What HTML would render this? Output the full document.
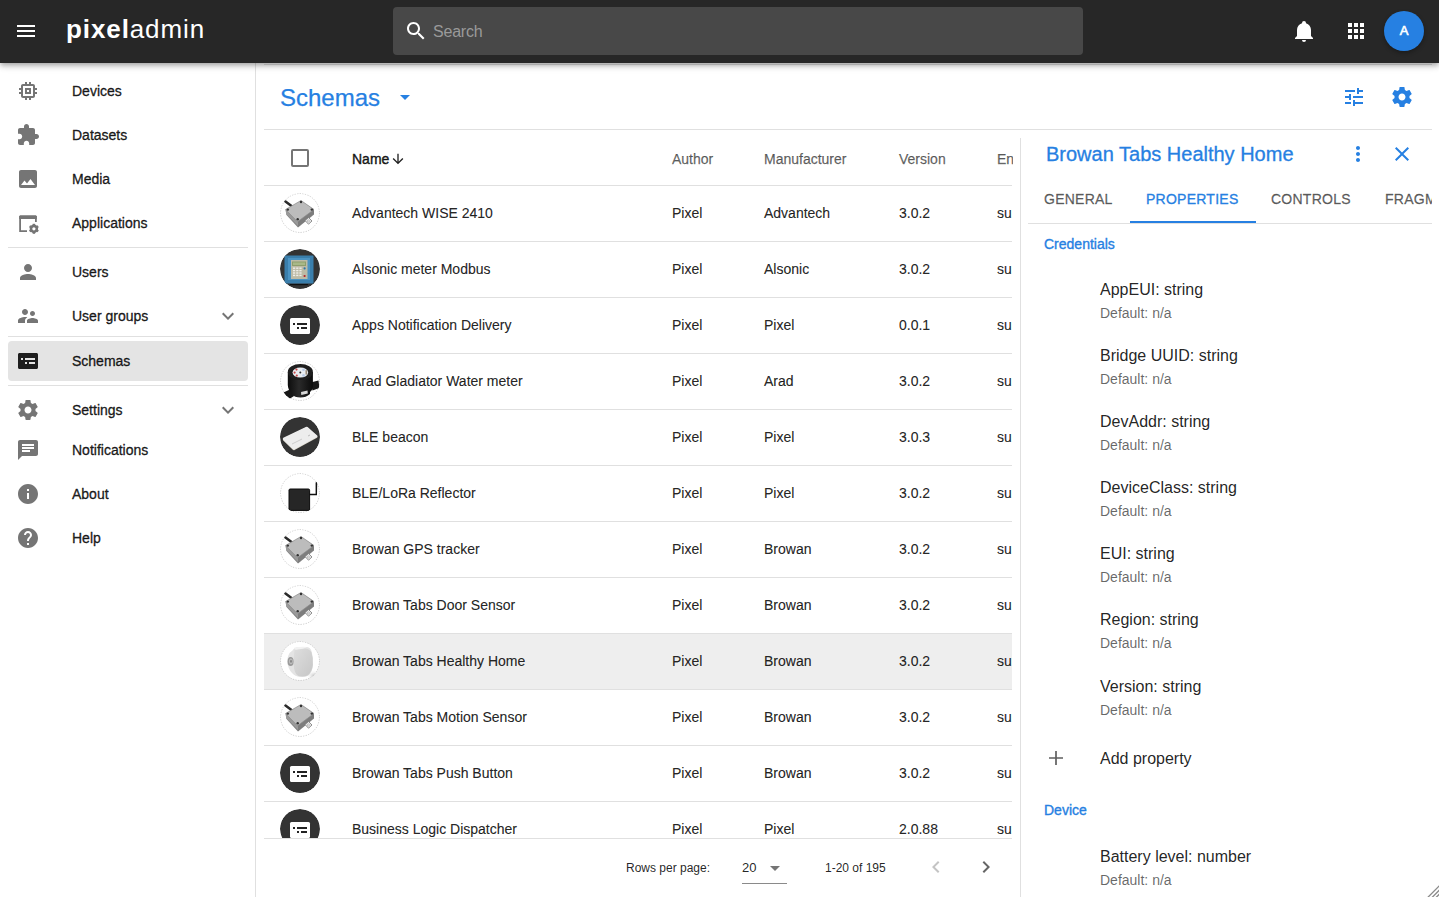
<!DOCTYPE html>
<html><head><meta charset="utf-8"><style>
*{box-sizing:border-box;margin:0;padding:0}
html,body{width:1439px;height:897px;overflow:hidden;background:#fff;font-family:"Liberation Sans",sans-serif;color:rgba(0,0,0,.87);position:relative}
.abs{position:absolute;white-space:nowrap}
svg{display:block}
#hdr{position:absolute;left:0;top:0;width:1439px;height:63px;background:#272727;box-shadow:0 2px 4px -1px rgba(0,0,0,.2),0 4px 5px 0 rgba(0,0,0,.14),0 1px 10px 0 rgba(0,0,0,.12);z-index:5}
.logo{font-size:26px;color:#fff;line-height:32px;letter-spacing:.9px}
#search{position:absolute;left:393px;top:7px;width:690px;height:48px;background:#484848;border-radius:4px}
#avatar{left:1384px;top:11px;width:40px;height:40px;border-radius:50%;background:#2680e2;color:#fff;font-size:13px;-webkit-text-stroke:.6px #fff;text-align:center;line-height:40px;box-shadow:0 2px 4px rgba(0,0,0,.3)}
#side{position:absolute;left:0;top:62px;width:256px;height:835px;border-right:1px solid #e0e0e0}
.navt{left:72px;font-size:14px;-webkit-text-stroke:.35px rgba(0,0,0,.87);color:rgba(0,0,0,.87);line-height:18px}
.hr{position:absolute;height:1px;background:#e0e0e0}
.th{font-size:14px;color:rgba(0,0,0,.6);-webkit-text-stroke:.25px rgba(0,0,0,.6);line-height:18px}
.td{font-size:14px;color:rgba(0,0,0,.87);-webkit-text-stroke:.15px rgba(0,0,0,.87);line-height:18px;letter-spacing:0}
.pg{font-size:12px;color:rgba(0,0,0,.87);line-height:16px}
.tab{font-size:14px;-webkit-text-stroke:.3px currentColor;letter-spacing:.25px;line-height:18px}
.sect{font-size:14px;-webkit-text-stroke:.35px #2680e2;color:#2680e2;line-height:18px}
.p1{font-size:16px;color:rgba(0,0,0,.87);line-height:20px;letter-spacing:0}
.p2{font-size:14px;color:rgba(0,0,0,.6);line-height:18px}
</style></head><body>
<div id="hdr">
<svg class="abs" style="left:14px;top:19px" width="24" height="24" viewBox="0 0 24 24"><path fill="#fff" d="M3 18h18v-2H3v2zm0-5h18v-2H3v2zm0-7v2h18V6H3z"/></svg>
<div class="abs logo" style="left:66px;top:13px"><b>pixel</b>admin</div>
<div id="search"><svg class="abs" style="left:11px;top:12px" width="24" height="24" viewBox="0 0 24 24"><path fill="#fff" d="M15.5 14h-.79l-.28-.27C15.41 12.59 16 11.11 16 9.5 16 5.91 13.09 3 9.5 3S3 5.91 3 9.5 5.91 16 9.5 16c1.61 0 3.09-.59 4.23-1.57l.27.28v.79l5 4.99L20.49 19l-4.99-5zm-6 0C7.01 14 5 11.99 5 9.5S7.01 5 9.5 5 14 7.01 14 9.5 11.99 14 9.5 14z"/></svg><div class="abs" style="left:40px;top:16px;font-size:16px;color:#9a9a9a;letter-spacing:-.2px">Search</div></div>
<svg class="abs" style="left:1292px;top:19px" width="24" height="24" viewBox="0 0 24 24"><path fill="#fff" d="M21 19v1H3v-1l2-2v-6c0-3.1 2.03-5.83 5-6.71V4a2 2 0 0 1 2-2 2 2 0 0 1 2 2v.29c2.97.88 5 3.61 5 6.71v6l2 2zm-7 2a2 2 0 0 1-2 2 2 2 0 0 1-2-2"/></svg>
<svg class="abs" style="left:1344px;top:19px" width="24" height="24" viewBox="0 0 24 24"><path fill="#fff" d="M4 8h4V4H4v4zm6 12h4v-4h-4v4zm-6 0h4v-4H4v4zm0-6h4v-4H4v4zm6 0h4v-4h-4v4zm6-10v4h4V4h-4zm-6 4h4V4h-4v4zm6 6h4v-4h-4v4zm0 6h4v-4h-4v4z"/></svg>
<div class="abs" id="avatar">A</div>
</div>
<div id="side"></div>
<svg class="abs" style="left:16px;top:79px" width="24" height="24" viewBox="0 0 24 24"><path fill="#757575" d="M15 9H9v6h6V9zm-2 4h-2v-2h2v2zm8-2V9h-2V7c0-1.1-.9-2-2-2h-2V3h-2v2h-2V3H9v2H7c-1.1 0-2 .9-2 2v2H3v2h2v2H3v2h2v2c0 1.1.9 2 2 2h2v2h2v-2h2v2h2v-2h2c1.1 0 2-.9 2-2v-2h2v-2h-2v-2h2zm-4 6H7V7h10v10z"/></svg>
<div class="abs navt" style="top:82px">Devices</div>
<svg class="abs" style="left:16px;top:123px" width="24" height="24" viewBox="0 0 24 24"><path fill="#757575" d="M20.5 11H19V7c0-1.1-.9-2-2-2h-4V3.5C13 2.12 11.88 1 10.5 1S8 2.12 8 3.5V5H4c-1.1 0-1.99.9-1.99 2v3.8H3.5c1.49 0 2.7 1.21 2.7 2.7s-1.21 2.7-2.7 2.7H2V20c0 1.1.9 2 2 2h3.8v-1.5c0-1.49 1.21-2.7 2.7-2.7 1.49 0 2.7 1.21 2.7 2.7V22H17c1.1 0 2-.9 2-2v-4h1.5c1.38 0 2.5-1.12 2.5-2.5S21.88 11 20.5 11z"/></svg>
<div class="abs navt" style="top:126px">Datasets</div>
<svg class="abs" style="left:16px;top:167px" width="24" height="24" viewBox="0 0 24 24"><path fill="#757575" d="M21 19V5c0-1.1-.9-2-2-2H5c-1.1 0-2 .9-2 2v14c0 1.1.9 2 2 2h14c1.1 0 2-.9 2-2zM8.5 13.5l2.5 3.01L14.5 12l4.5 6H5l3.5-4.5z"/></svg>
<div class="abs navt" style="top:170px">Media</div>
<svg class="abs" style="left:16px;top:211px" width="24" height="24" viewBox="0 0 24 24"><path fill="none" stroke="#757575" stroke-width="1.8" d="M11 20.1H4.1V5.9h15.8v5"/><path fill="#757575" d="M3.2 5.6c0-.8.6-1.4 1.4-1.4h14.8c.8 0 1.4.6 1.4 1.4V8H3.2z"/><g transform="translate(17.9 17.8)"><circle r="2.9" fill="none" stroke="#757575" stroke-width="2.6"/><rect x="-1.2" y="-5" width="2.4" height="2.4" fill="#757575" transform="rotate(0)"/><rect x="-1.2" y="-5" width="2.4" height="2.4" fill="#757575" transform="rotate(60)"/><rect x="-1.2" y="-5" width="2.4" height="2.4" fill="#757575" transform="rotate(120)"/><rect x="-1.2" y="-5" width="2.4" height="2.4" fill="#757575" transform="rotate(180)"/><rect x="-1.2" y="-5" width="2.4" height="2.4" fill="#757575" transform="rotate(240)"/><rect x="-1.2" y="-5" width="2.4" height="2.4" fill="#757575" transform="rotate(300)"/></g></svg>
<div class="abs navt" style="top:214px">Applications</div>
<svg class="abs" style="left:16px;top:260px" width="24" height="24" viewBox="0 0 24 24"><path fill="#757575" d="M12 12c2.21 0 4-1.79 4-4s-1.79-4-4-4-4 1.79-4 4 1.79 4 4 4zm0 2c-2.67 0-8 1.34-8 4v2h16v-2c0-2.66-5.33-4-8-4z"/></svg>
<div class="abs navt" style="top:263px">Users</div>
<svg class="abs" style="left:16px;top:304px" width="24" height="24" viewBox="0 0 24 24"><path fill="#757575" d="M16.5 12c1.38 0 2.49-1.12 2.49-2.5S17.88 7 16.5 7C15.12 7 14 8.12 14 9.5s1.12 2.5 2.5 2.5zM9 11c1.66 0 2.99-1.34 2.99-3S10.66 5 9 5C7.34 5 6 6.34 6 8s1.34 3 3 3zm7.5 3c-1.83 0-5.5.92-5.5 2.75V19h11v-2.25c0-1.83-3.67-2.75-5.5-2.75zM9 13c-2.33 0-7 1.17-7 3.5V19h7v-2.25c0-.85.33-2.34 2.37-3.47C10.5 13.1 9.66 13 9 13z"/></svg>
<div class="abs navt" style="top:307px">User groups</div>
<svg class="abs" style="left:216px;top:304px" width="24" height="24" viewBox="0 0 24 24"><path fill="#757575" d="M16.59 8.59L12 13.17 7.41 8.59 6 10l6 6 6-6z"/></svg>
<div class="abs" style="left:8px;top:341px;width:240px;height:40px;border-radius:4px;background:#e4e4e4"></div>
<svg class="abs" style="left:16px;top:349px" width="24" height="24" viewBox="0 0 24 24"><path fill="#1e1e1e" d="M3.5 4h17c.8 0 1.5.7 1.5 1.5v13c0 .8-.7 1.5-1.5 1.5h-17C2.7 20 2 19.3 2 18.5v-13C2 4.7 2.7 4 3.5 4zM5 9v2h2V9H5zm4 0v2h10V9H9zm0 4v2h2v-2H9zm4 0v2h6v-2h-6z"/></svg>
<div class="abs navt" style="top:352px">Schemas</div>
<svg class="abs" style="left:16px;top:398px" width="24" height="24" viewBox="0 0 24 24"><path fill="#757575" d="M19.43 12.98c.04-.32.07-.64.07-.98s-.03-.66-.07-.98l2.11-1.65c.19-.15.24-.42.12-.64l-2-3.46c-.12-.22-.39-.3-.61-.22l-2.49 1c-.52-.4-1.08-.73-1.69-.98l-.38-2.65C14.46 2.18 14.25 2 14 2h-4c-.25 0-.46.18-.49.42l-.38 2.65c-.61.25-1.17.59-1.69.98l-2.49-1c-.23-.09-.49 0-.61.22l-2 3.460c-.13.22-.07.49.12.64l2.11 1.65c-.04.32-.07.65-.07.98s.03.66.07.98l-2.11 1.65c-.19.15-.24.42-.12.64l2 3.46c.12.22.39.3.61.22l2.49-1c.52.4 1.08.73 1.69.98l.38 2.65c.03.24.24.42.49.42h4c.25 0 .46-.18.49-.42l.38-2.65c.61-.25 1.17-.59 1.69-.98l2.49 1c.23.09.49 0 .61-.22l2-3.46c.12-.22.07-.49-.12-.64l-2.11-1.65zM12 15.5c-1.93 0-3.5-1.57-3.5-3.5s1.57-3.5 3.5-3.5 3.5 1.57 3.5 3.5-1.57 3.5-3.5 3.5z"/></svg>
<div class="abs navt" style="top:401px">Settings</div>
<svg class="abs" style="left:216px;top:398px" width="24" height="24" viewBox="0 0 24 24"><path fill="#757575" d="M16.59 8.59L12 13.17 7.41 8.59 6 10l6 6 6-6z"/></svg>
<svg class="abs" style="left:16px;top:438px" width="24" height="24" viewBox="0 0 24 24"><path fill="#757575" d="M20 2H4c-1.1 0-1.99.9-1.99 2L2 22l4-4h14c1.1 0 2-.9 2-2V4c0-1.1-.9-2-2-2zM6 9h12v2H6V9zm8 5H6v-2h8v2zm4-6H6V6h12v2z"/></svg>
<div class="abs navt" style="top:441px">Notifications</div>
<svg class="abs" style="left:16px;top:482px" width="24" height="24" viewBox="0 0 24 24"><path fill="#757575" d="M12 2C6.48 2 2 6.48 2 12s4.48 10 10 10 10-4.48 10-10S17.52 2 12 2zm1 15h-2v-6h2v6zm0-8h-2V7h2v2z"/></svg>
<div class="abs navt" style="top:485px">About</div>
<svg class="abs" style="left:16px;top:526px" width="24" height="24" viewBox="0 0 24 24"><path fill="#757575" d="M12 2C6.48 2 2 6.48 2 12s4.48 10 10 10 10-4.48 10-10S17.52 2 12 2zm1 17h-2v-2h2v2zm2.07-7.75l-.9.92C13.45 12.9 13 13.5 13 15h-2v-.5c0-1.1.45-2.1 1.17-2.83l1.24-1.26c.37-.36.59-.86.59-1.41 0-1.1-.9-2-2-2s-2 .9-2 2H8c0-2.21 1.79-4 4-4s4 1.79 4 4c0 .88-.36 1.68-.93 2.25z"/></svg>
<div class="abs navt" style="top:529px">Help</div>
<div class="hr" style="left:8px;width:240px;top:247px"></div>
<div class="hr" style="left:8px;width:240px;top:336px"></div>
<div class="hr" style="left:8px;width:240px;top:385px"></div>
<div class="abs" style="left:280px;top:83px;font-size:24px;color:#2680e2;-webkit-text-stroke:.25px #2680e2;line-height:30px">Schemas</div>
<svg class="abs" style="left:393px;top:85px" width="24" height="24" viewBox="0 0 24 24"><path fill="#2680e2" d="M7 10l5 5 5-5z"/></svg>
<svg class="abs" style="left:1342px;top:85px" width="24" height="24" viewBox="0 0 24 24"><path fill="#2680e2" d="M3 17v2h6v-2H3zM3 5v2h10V5H3zm10 16v-2h8v-2h-8v-2h-2v6h2zM7 9v2H3v2h4v2h2V9H7zm14 4v-2H11v2h10zm-6-4h2V7h4V5h-4V3h-2v6z"/></svg>
<svg class="abs" style="left:1390px;top:85px" width="24" height="24" viewBox="0 0 24 24"><path fill="#2680e2" d="M19.43 12.98c.04-.32.07-.64.07-.98s-.03-.66-.07-.98l2.11-1.65c.19-.15.24-.42.12-.64l-2-3.46c-.12-.22-.39-.3-.61-.22l-2.49 1c-.52-.4-1.08-.73-1.69-.98l-.38-2.65C14.46 2.18 14.25 2 14 2h-4c-.25 0-.46.18-.49.42l-.38 2.65c-.61.25-1.17.59-1.69.98l-2.49-1c-.23-.09-.49 0-.61.22l-2 3.460c-.13.22-.07.49.12.64l2.11 1.65c-.04.32-.07.65-.07.98s.03.66.07.98l-2.11 1.65c-.19.15-.24.42-.12.64l2 3.46c.12.22.39.3.61.22l2.49-1c.52.4 1.08.73 1.69.98l.38 2.65c.03.24.24.42.49.42h4c.25 0 .46-.18.49-.42l.38-2.65c.61-.25 1.17-.59 1.69-.98l2.49 1c.23.09.49 0 .61-.22l2-3.46c.12-.22.07-.49-.12-.64l-2.11-1.65zM12 15.5c-1.93 0-3.5-1.57-3.5-3.5s1.57-3.5 3.5-3.5 3.5 1.57 3.5 3.5-1.57 3.5-3.5 3.5z"/></svg>
<div class="hr" style="left:264px;width:1168px;top:129px"></div>
<div class="hr" style="left:264px;width:1168px;top:64px"></div>
<div class="abs" style="left:291px;top:149px;width:18px;height:18px;border:2px solid #757575;border-radius:2px"></div>
<div class="abs th" style="left:352px;top:150px;color:rgba(0,0,0,.87);-webkit-text-stroke:.45px rgba(0,0,0,.87)">Name</div>
<svg class="abs" style="left:390px;top:151px" width="16" height="16" viewBox="0 0 24 24"><path fill="#212121" d="M20 12l-1.41-1.41L13 16.17V4h-2v12.17l-5.58-5.59L4 12l8 8 8-8z"/></svg>
<div class="abs th" style="left:672px;top:150px">Author</div>
<div class="abs th" style="left:764px;top:150px">Manufacturer</div>
<div class="abs th" style="left:899px;top:150px">Version</div>
<div class="abs th" style="left:997px;top:150px;width:16px;overflow:hidden">En</div>
<div class="hr" style="left:264px;width:748px;top:185px"></div>
<svg class="abs" style="left:280px;top:193px;clip-path:circle(20px at 20px 20px)" width="40" height="40" viewBox="0 0 40 40"><circle cx="20" cy="20" r="19.5" fill="#fff" stroke="#b4b4b4" stroke-width="0.7" stroke-dasharray="1.3 1.3"/><line x1="5.5" y1="8.5" x2="11.5" y2="13" stroke="#2a2a2a" stroke-width="2.6" stroke-linecap="round"/><path d="M5.5 17 L21 8 L34 16.5 L34 21.5 L18 34.5 L6.5 22 Z" fill="#7d7d7d"/><path d="M6 21 L18 33 L18 29 L6 17 Z" fill="#9a9a9a"/><path d="M5.5 16.5 L21 7.5 L34 16.5 L17.5 28.8 Z" fill="#bcbcbc" stroke="#8c8c8c" stroke-width=".7" stroke-linejoin="round"/><circle cx="21" cy="9" r="1.2" fill="#333"/><circle cx="7.8" cy="16.6" r="1.2" fill="#333"/><circle cx="31.8" cy="16.6" r="1.2" fill="#333"/><circle cx="17.7" cy="26.2" r="1.2" fill="#333"/><path d="M25 27.5 L28.5 24.5 L32 28 L28.5 31.2 Z" fill="#e8e8e8" stroke="#777" stroke-width=".8"/><circle cx="28.4" cy="28" r="1" fill="#fff" stroke="#888" stroke-width=".5"/></svg>
<div class="abs td" style="left:352px;top:204px">Advantech WISE 2410</div>
<div class="abs td" style="left:672px;top:204px">Pixel</div>
<div class="abs td" style="left:764px;top:204px">Advantech</div>
<div class="abs td" style="left:899px;top:204px">3.0.2</div>
<div class="abs td" style="left:997px;top:204px;width:16px;overflow:hidden">su</div>
<div class="hr" style="left:264px;width:748px;top:241px"></div>
<svg class="abs" style="left:280px;top:249px;clip-path:circle(20px at 20px 20px)" width="40" height="40" viewBox="0 0 40 40"><circle cx="20" cy="20" r="20" fill="#333"/><rect x="4.5" y="6.5" width="29" height="28" rx="1" fill="#3a7eab"/><rect x="8" y="9" width="22" height="22" fill="#4b93c2"/><rect x="11" y="11" width="16.5" height="19" fill="#bdbba6"/><rect x="12" y="12.5" width="14" height="4.5" fill="#8e9e6c"/><rect x="13" y="13.5" width="12" height="2.5" fill="#a8b888"/><rect x="13.0" y="18.5" width="2.2" height="1.4" fill="#eeeeea"/><rect x="16.2" y="18.5" width="2.2" height="1.4" fill="#eeeeea"/><rect x="19.4" y="18.5" width="2.2" height="1.4" fill="#eeeeea"/><rect x="13.0" y="20.9" width="2.2" height="1.4" fill="#eeeeea"/><rect x="16.2" y="20.9" width="2.2" height="1.4" fill="#eeeeea"/><rect x="19.4" y="20.9" width="2.2" height="1.4" fill="#eeeeea"/><rect x="13.0" y="23.3" width="2.2" height="1.4" fill="#eeeeea"/><rect x="16.2" y="23.3" width="2.2" height="1.4" fill="#eeeeea"/><rect x="19.4" y="23.3" width="2.2" height="1.4" fill="#eeeeea"/><rect x="13.0" y="25.7" width="2.2" height="1.4" fill="#eeeeea"/><rect x="16.2" y="25.7" width="2.2" height="1.4" fill="#eeeeea"/><rect x="19.4" y="25.7" width="2.2" height="1.4" fill="#eeeeea"/><circle cx="24.6" cy="19.4" r="1.1" fill="#2f78a8"/><circle cx="24.6" cy="27" r="1.1" fill="#b8202a"/><rect x="10" y="35" width="18" height="1.2" fill="#111"/></svg>
<div class="abs td" style="left:352px;top:260px">Alsonic meter Modbus</div>
<div class="abs td" style="left:672px;top:260px">Pixel</div>
<div class="abs td" style="left:764px;top:260px">Alsonic</div>
<div class="abs td" style="left:899px;top:260px">3.0.2</div>
<div class="abs td" style="left:997px;top:260px;width:16px;overflow:hidden">su</div>
<div class="hr" style="left:264px;width:748px;top:297px"></div>
<svg class="abs" style="left:280px;top:305px;clip-path:circle(20px at 20px 20px)" width="40" height="40" viewBox="0 0 40 40"><circle cx="20" cy="20" r="20" fill="#333"/><rect x="10" y="13" width="20" height="16" rx="1.5" fill="#fff"/><rect x="13" y="18" width="2" height="2" fill="#222"/><rect x="17" y="18" width="10" height="2" fill="#222"/><rect x="17" y="22" width="2" height="2" fill="#222"/><rect x="21" y="22" width="6" height="2" fill="#222"/></svg>
<div class="abs td" style="left:352px;top:316px">Apps Notification Delivery</div>
<div class="abs td" style="left:672px;top:316px">Pixel</div>
<div class="abs td" style="left:764px;top:316px">Pixel</div>
<div class="abs td" style="left:899px;top:316px">0.0.1</div>
<div class="abs td" style="left:997px;top:316px;width:16px;overflow:hidden">su</div>
<div class="hr" style="left:264px;width:748px;top:353px"></div>
<svg class="abs" style="left:280px;top:361px;clip-path:circle(20px at 20px 20px)" width="40" height="40" viewBox="0 0 40 40"><circle cx="20" cy="20" r="19.5" fill="#fff" stroke="#b4b4b4" stroke-width="0.7" stroke-dasharray="1.3 1.3"/><defs><linearGradient id="wg" x1="0" x2="1"><stop offset="0" stop-color="#0c0c0c"/><stop offset=".45" stop-color="#2a2a2a"/><stop offset="1" stop-color="#0a0a0a"/></linearGradient></defs><path d="M3.5 31.5 L12 27.5 L14 35 L8.5 38.5 Z" fill="#161616"/><path d="M30.5 21.5 L38.5 19.5 L39.5 27 L32.5 29.5 Z" fill="#161616"/><path d="M7.8 11 L7.8 24 Q8 29 11 31 L11 33 Q15 36.5 20.5 36.5 Q26 36.5 30 33 L30 31 Q33 29 32.9 24 L32.9 11 Z" fill="url(#wg)"/><ellipse cx="20.35" cy="11" rx="12.55" ry="8" fill="#1e1e1e"/><ellipse cx="20.35" cy="11.6" rx="7.8" ry="5" fill="#e9edf1"/><circle cx="16.5" cy="8.6" r="1.1" fill="#c84848"/><circle cx="14.6" cy="11.6" r="1.1" fill="#c84848"/><circle cx="16.8" cy="14.6" r="1.1" fill="#c84848"/><circle cx="23.5" cy="8.8" r="1.3" fill="#b9cbe6"/><circle cx="23.5" cy="14.4" r="1.3" fill="#b9cbe6"/><circle cx="20.3" cy="11.4" r="1" fill="#333"/><rect x="25.5" y="9.2" width="1.6" height="4.4" fill="#9a8a78"/><path d="M21 31 L27.5 29.5 L27.8 32.5 L21.3 34 Z" fill="#d8d8d8"/></svg>
<div class="abs td" style="left:352px;top:372px">Arad Gladiator Water meter</div>
<div class="abs td" style="left:672px;top:372px">Pixel</div>
<div class="abs td" style="left:764px;top:372px">Arad</div>
<div class="abs td" style="left:899px;top:372px">3.0.2</div>
<div class="abs td" style="left:997px;top:372px;width:16px;overflow:hidden">su</div>
<div class="hr" style="left:264px;width:748px;top:409px"></div>
<svg class="abs" style="left:280px;top:417px;clip-path:circle(20px at 20px 20px)" width="40" height="40" viewBox="0 0 40 40"><circle cx="20" cy="20" r="20" fill="#333"/><path d="M3.3 21.6 L25.8 10.6 Q26.8 10.1 27.6 10.8 L37.2 19.2 Q38 20.1 37 20.8 L14.6 33 Q13.6 33.5 12.8 32.8 L3 23.2 Q2.5 22.2 3.3 21.6Z" fill="#d9d5c9"/><path d="M3.3 20.8 L25.8 9.9 Q26.8 9.4 27.6 10.1 L37.2 18.4 Q38 19.3 37 20 L14.6 32.2 Q13.6 32.7 12.8 32 L3 22.4 Q2.5 21.4 3.3 20.8Z" fill="#ededed"/><path d="M12 27 L22 22" stroke="#c4c4c4" stroke-width=".8"/><path d="M28 19 L30 18" stroke="#bbb" stroke-width="1"/></svg>
<div class="abs td" style="left:352px;top:428px">BLE beacon</div>
<div class="abs td" style="left:672px;top:428px">Pixel</div>
<div class="abs td" style="left:764px;top:428px">Pixel</div>
<div class="abs td" style="left:899px;top:428px">3.0.3</div>
<div class="abs td" style="left:997px;top:428px;width:16px;overflow:hidden">su</div>
<div class="hr" style="left:264px;width:748px;top:465px"></div>
<svg class="abs" style="left:280px;top:473px;clip-path:circle(20px at 20px 20px)" width="40" height="40" viewBox="0 0 40 40"><circle cx="20" cy="20" r="19.5" fill="#fff" stroke="#b4b4b4" stroke-width="0.7" stroke-dasharray="1.3 1.3"/><path d="M35.6 9.5 L37.2 9 L37 22.2 L29.5 22.2 L29.5 20.8 L35.6 20.8 Z" fill="#111"/><rect x="9" y="16" width="20.6" height="21.4" rx="1.2" fill="#262626" stroke="#0c0c0c" stroke-width="1"/></svg>
<div class="abs td" style="left:352px;top:484px">BLE/LoRa Reflector</div>
<div class="abs td" style="left:672px;top:484px">Pixel</div>
<div class="abs td" style="left:764px;top:484px">Pixel</div>
<div class="abs td" style="left:899px;top:484px">3.0.2</div>
<div class="abs td" style="left:997px;top:484px;width:16px;overflow:hidden">su</div>
<div class="hr" style="left:264px;width:748px;top:521px"></div>
<svg class="abs" style="left:280px;top:529px;clip-path:circle(20px at 20px 20px)" width="40" height="40" viewBox="0 0 40 40"><circle cx="20" cy="20" r="19.5" fill="#fff" stroke="#b4b4b4" stroke-width="0.7" stroke-dasharray="1.3 1.3"/><line x1="5.5" y1="8.5" x2="11.5" y2="13" stroke="#2a2a2a" stroke-width="2.6" stroke-linecap="round"/><path d="M5.5 17 L21 8 L34 16.5 L34 21.5 L18 34.5 L6.5 22 Z" fill="#7d7d7d"/><path d="M6 21 L18 33 L18 29 L6 17 Z" fill="#9a9a9a"/><path d="M5.5 16.5 L21 7.5 L34 16.5 L17.5 28.8 Z" fill="#bcbcbc" stroke="#8c8c8c" stroke-width=".7" stroke-linejoin="round"/><circle cx="21" cy="9" r="1.2" fill="#333"/><circle cx="7.8" cy="16.6" r="1.2" fill="#333"/><circle cx="31.8" cy="16.6" r="1.2" fill="#333"/><circle cx="17.7" cy="26.2" r="1.2" fill="#333"/><path d="M25 27.5 L28.5 24.5 L32 28 L28.5 31.2 Z" fill="#e8e8e8" stroke="#777" stroke-width=".8"/><circle cx="28.4" cy="28" r="1" fill="#fff" stroke="#888" stroke-width=".5"/></svg>
<div class="abs td" style="left:352px;top:540px">Browan GPS tracker</div>
<div class="abs td" style="left:672px;top:540px">Pixel</div>
<div class="abs td" style="left:764px;top:540px">Browan</div>
<div class="abs td" style="left:899px;top:540px">3.0.2</div>
<div class="abs td" style="left:997px;top:540px;width:16px;overflow:hidden">su</div>
<div class="hr" style="left:264px;width:748px;top:577px"></div>
<svg class="abs" style="left:280px;top:585px;clip-path:circle(20px at 20px 20px)" width="40" height="40" viewBox="0 0 40 40"><circle cx="20" cy="20" r="19.5" fill="#fff" stroke="#b4b4b4" stroke-width="0.7" stroke-dasharray="1.3 1.3"/><line x1="5.5" y1="8.5" x2="11.5" y2="13" stroke="#2a2a2a" stroke-width="2.6" stroke-linecap="round"/><path d="M5.5 17 L21 8 L34 16.5 L34 21.5 L18 34.5 L6.5 22 Z" fill="#7d7d7d"/><path d="M6 21 L18 33 L18 29 L6 17 Z" fill="#9a9a9a"/><path d="M5.5 16.5 L21 7.5 L34 16.5 L17.5 28.8 Z" fill="#bcbcbc" stroke="#8c8c8c" stroke-width=".7" stroke-linejoin="round"/><circle cx="21" cy="9" r="1.2" fill="#333"/><circle cx="7.8" cy="16.6" r="1.2" fill="#333"/><circle cx="31.8" cy="16.6" r="1.2" fill="#333"/><circle cx="17.7" cy="26.2" r="1.2" fill="#333"/><path d="M25 27.5 L28.5 24.5 L32 28 L28.5 31.2 Z" fill="#e8e8e8" stroke="#777" stroke-width=".8"/><circle cx="28.4" cy="28" r="1" fill="#fff" stroke="#888" stroke-width=".5"/></svg>
<div class="abs td" style="left:352px;top:596px">Browan Tabs Door Sensor</div>
<div class="abs td" style="left:672px;top:596px">Pixel</div>
<div class="abs td" style="left:764px;top:596px">Browan</div>
<div class="abs td" style="left:899px;top:596px">3.0.2</div>
<div class="abs td" style="left:997px;top:596px;width:16px;overflow:hidden">su</div>
<div class="hr" style="left:264px;width:748px;top:633px"></div>
<div class="abs" style="left:264px;top:634px;width:748px;height:55px;background:#eeeeee"></div>
<svg class="abs" style="left:280px;top:641px;clip-path:circle(20px at 20px 20px)" width="40" height="40" viewBox="0 0 40 40"><circle cx="20" cy="20" r="19.5" fill="#fff" stroke="#b4b4b4" stroke-width="0.7" stroke-dasharray="1.3 1.3"/><defs><radialGradient id="hs" cx=".75" cy=".8" r=".5"><stop offset="0" stop-color="#c8c8c8"/><stop offset="1" stop-color="#fff" stop-opacity="0"/></radialGradient><linearGradient id="hf" x1="0" y1="0" x2="1" y2="1"><stop offset="0" stop-color="#dedede"/><stop offset="1" stop-color="#c6c6c6"/></linearGradient></defs><ellipse cx="30" cy="31" rx="8" ry="6" fill="url(#hs)"/><path d="M12.5 9.5 Q14 6.5 18 6.2 L27 6 Q30.5 6.5 31.5 10 Q33.5 16 33 24 Q32.5 31 28.5 34.5 Q25 36.5 20 36 Q15 35.5 12 32 Q8 28 7.3 21 Q7 13 12.5 9.5Z" fill="#e4e4e4"/><path d="M14.5 9 Q19 7.2 25 7.5 Q30 8 31.5 11.5 Q33.2 17 32.8 24 Q32 31.5 27.5 34.5 Q23 36.2 18.5 35 Q15.5 33.5 14.2 28 Q13 20 14.5 9Z" fill="url(#hf)"/><path d="M14 6.8 Q20 5.5 27 6 Q24 8 15.5 8.8Z" fill="#f2f2f2"/><ellipse cx="10.6" cy="20.5" rx="3" ry="4.6" fill="#9a9a9a"/><ellipse cx="10.9" cy="20.3" rx="1.9" ry="2.9" fill="#bdbdbd"/><ellipse cx="11" cy="20.2" rx="1" ry="1.5" fill="#8a8a8a"/></svg>
<div class="abs td" style="left:352px;top:652px">Browan Tabs Healthy Home</div>
<div class="abs td" style="left:672px;top:652px">Pixel</div>
<div class="abs td" style="left:764px;top:652px">Browan</div>
<div class="abs td" style="left:899px;top:652px">3.0.2</div>
<div class="abs td" style="left:997px;top:652px;width:16px;overflow:hidden">su</div>
<div class="hr" style="left:264px;width:748px;top:689px"></div>
<svg class="abs" style="left:280px;top:697px;clip-path:circle(20px at 20px 20px)" width="40" height="40" viewBox="0 0 40 40"><circle cx="20" cy="20" r="19.5" fill="#fff" stroke="#b4b4b4" stroke-width="0.7" stroke-dasharray="1.3 1.3"/><line x1="5.5" y1="8.5" x2="11.5" y2="13" stroke="#2a2a2a" stroke-width="2.6" stroke-linecap="round"/><path d="M5.5 17 L21 8 L34 16.5 L34 21.5 L18 34.5 L6.5 22 Z" fill="#7d7d7d"/><path d="M6 21 L18 33 L18 29 L6 17 Z" fill="#9a9a9a"/><path d="M5.5 16.5 L21 7.5 L34 16.5 L17.5 28.8 Z" fill="#bcbcbc" stroke="#8c8c8c" stroke-width=".7" stroke-linejoin="round"/><circle cx="21" cy="9" r="1.2" fill="#333"/><circle cx="7.8" cy="16.6" r="1.2" fill="#333"/><circle cx="31.8" cy="16.6" r="1.2" fill="#333"/><circle cx="17.7" cy="26.2" r="1.2" fill="#333"/><path d="M25 27.5 L28.5 24.5 L32 28 L28.5 31.2 Z" fill="#e8e8e8" stroke="#777" stroke-width=".8"/><circle cx="28.4" cy="28" r="1" fill="#fff" stroke="#888" stroke-width=".5"/></svg>
<div class="abs td" style="left:352px;top:708px">Browan Tabs Motion Sensor</div>
<div class="abs td" style="left:672px;top:708px">Pixel</div>
<div class="abs td" style="left:764px;top:708px">Browan</div>
<div class="abs td" style="left:899px;top:708px">3.0.2</div>
<div class="abs td" style="left:997px;top:708px;width:16px;overflow:hidden">su</div>
<div class="hr" style="left:264px;width:748px;top:745px"></div>
<svg class="abs" style="left:280px;top:753px;clip-path:circle(20px at 20px 20px)" width="40" height="40" viewBox="0 0 40 40"><circle cx="20" cy="20" r="20" fill="#333"/><rect x="10" y="13" width="20" height="16" rx="1.5" fill="#fff"/><rect x="13" y="18" width="2" height="2" fill="#222"/><rect x="17" y="18" width="10" height="2" fill="#222"/><rect x="17" y="22" width="2" height="2" fill="#222"/><rect x="21" y="22" width="6" height="2" fill="#222"/></svg>
<div class="abs td" style="left:352px;top:764px">Browan Tabs Push Button</div>
<div class="abs td" style="left:672px;top:764px">Pixel</div>
<div class="abs td" style="left:764px;top:764px">Browan</div>
<div class="abs td" style="left:899px;top:764px">3.0.2</div>
<div class="abs td" style="left:997px;top:764px;width:16px;overflow:hidden">su</div>
<div class="hr" style="left:264px;width:748px;top:801px"></div>
<svg class="abs" style="left:280px;top:809px;clip-path:circle(20px at 20px 20px)" width="40" height="40" viewBox="0 0 40 40"><circle cx="20" cy="20" r="20" fill="#333"/><rect x="10" y="13" width="20" height="16" rx="1.5" fill="#fff"/><rect x="13" y="18" width="2" height="2" fill="#222"/><rect x="17" y="18" width="10" height="2" fill="#222"/><rect x="17" y="22" width="2" height="2" fill="#222"/><rect x="21" y="22" width="6" height="2" fill="#222"/></svg>
<div class="abs td" style="left:352px;top:820px">Business Logic Dispatcher</div>
<div class="abs td" style="left:672px;top:820px">Pixel</div>
<div class="abs td" style="left:764px;top:820px">Pixel</div>
<div class="abs td" style="left:899px;top:820px">2.0.88</div>
<div class="abs td" style="left:997px;top:820px;width:16px;overflow:hidden">su</div>
<div class="hr" style="left:264px;width:748px;top:857px"></div>
<div class="abs" style="left:262px;top:838px;width:756px;height:59px;background:#fff"></div>
<div class="hr" style="left:264px;width:748px;top:838px"></div>
<div class="abs pg" style="left:626px;top:860px">Rows per page:</div>
<div class="abs pg" style="left:742px;top:860px;font-size:13px;color:rgba(0,0,0,.87)">20</div>
<svg class="abs" style="left:763px;top:856px" width="24" height="24" viewBox="0 0 24 24"><path fill="#757575" d="M7 10l5 5 5-5z"/></svg>
<div class="abs" style="left:742px;top:883px;width:45px;height:1px;background:#8a8a8a"></div>
<div class="abs pg" style="left:825px;top:860px;font-size:12px;color:rgba(0,0,0,.87)">1-20 of 195</div>
<svg class="abs" style="left:924px;top:855px" width="24" height="24" viewBox="0 0 24 24"><path fill="#c4c4c4" d="M15.41 7.41L14 6l-6 6 6 6 1.41-1.41L10.83 12z"/></svg>
<svg class="abs" style="left:974px;top:855px" width="24" height="24" viewBox="0 0 24 24"><path fill="#666" d="M10 6L8.59 7.41 13.17 12l-4.58 4.59L10 18l6-6z"/></svg>
<div class="abs" style="left:1020px;top:138px;width:1px;height:759px;background:#e0e0e0"></div>
<div class="abs" style="left:1046px;top:142px;font-size:20px;color:#2680e2;-webkit-text-stroke:.3px #2680e2;line-height:24px">Browan Tabs Healthy Home</div>
<svg class="abs" style="left:1346px;top:142px" width="24" height="24" viewBox="0 0 24 24"><path fill="#2680e2" d="M12 8c1.1 0 2-.9 2-2s-.9-2-2-2-2 .9-2 2 .9 2 2 2zm0 2c-1.1 0-2 .9-2 2s.9 2 2 2 2-.9 2-2-.9-2-2-2zm0 6c-1.1 0-2 .9-2 2s.9 2 2 2 2-.9 2-2-.9-2-2-2z"/></svg>
<svg class="abs" style="left:1390px;top:142px" width="24" height="24" viewBox="0 0 24 24"><path fill="#2680e2" d="M19 6.41L17.59 5 12 10.59 6.41 5 5 6.41 10.59 12 5 17.59 6.41 19 12 13.41 17.59 19 19 17.59 13.41 12z"/></svg>
<div class="abs" style="left:1028px;top:175px;width:404px;height:49px;overflow:hidden">
<div class="abs tab" style="left:16px;top:15px;color:rgba(0,0,0,.6)">GENERAL</div>
<div class="abs tab" style="left:118px;top:15px;color:#2680e2">PROPERTIES</div>
<div class="abs tab" style="left:243px;top:15px;color:rgba(0,0,0,.6)">CONTROLS</div>
<div class="abs tab" style="left:357px;top:15px;color:rgba(0,0,0,.6)">FRAGMENTS</div>
<div class="abs" style="left:102px;top:46px;width:126px;height:2px;background:#2680e2"></div>
</div>
<div class="hr" style="left:1028px;width:404px;top:223px"></div>
<div class="abs sect" style="left:1044px;top:235px">Credentials</div>
<div class="abs p1" style="left:1100px;top:280px">AppEUI: string</div>
<div class="abs p2" style="left:1100px;top:304px">Default: n/a</div>
<div class="abs p1" style="left:1100px;top:346px">Bridge UUID: string</div>
<div class="abs p2" style="left:1100px;top:370px">Default: n/a</div>
<div class="abs p1" style="left:1100px;top:412px">DevAddr: string</div>
<div class="abs p2" style="left:1100px;top:436px">Default: n/a</div>
<div class="abs p1" style="left:1100px;top:478px">DeviceClass: string</div>
<div class="abs p2" style="left:1100px;top:502px">Default: n/a</div>
<div class="abs p1" style="left:1100px;top:544px">EUI: string</div>
<div class="abs p2" style="left:1100px;top:568px">Default: n/a</div>
<div class="abs p1" style="left:1100px;top:610px">Region: string</div>
<div class="abs p2" style="left:1100px;top:634px">Default: n/a</div>
<div class="abs p1" style="left:1100px;top:677px">Version: string</div>
<div class="abs p2" style="left:1100px;top:701px">Default: n/a</div>
<svg class="abs" style="left:1044px;top:746px" width="24" height="24" viewBox="0 0 24 24"><path d="M12 5v14M5 12h14" stroke="#5f5f5f" stroke-width="1.7"/></svg>
<div class="abs p1" style="left:1100px;top:749px">Add property</div>
<div class="abs sect" style="left:1044px;top:801px">Device</div>
<div class="abs p1" style="left:1100px;top:847px">Battery level: number</div>
<div class="abs p2" style="left:1100px;top:871px">Default: n/a</div>
<svg class="abs" style="left:1419px;top:877px" width="20" height="20" viewBox="0 0 20 20"><path d="M8.7 20.5 L20.5 8.7 M13 20.5 L20.5 13 M17 20.5 L20.5 17" stroke="#8a8a8a" stroke-width="1.3"/></svg>
</body></html>
